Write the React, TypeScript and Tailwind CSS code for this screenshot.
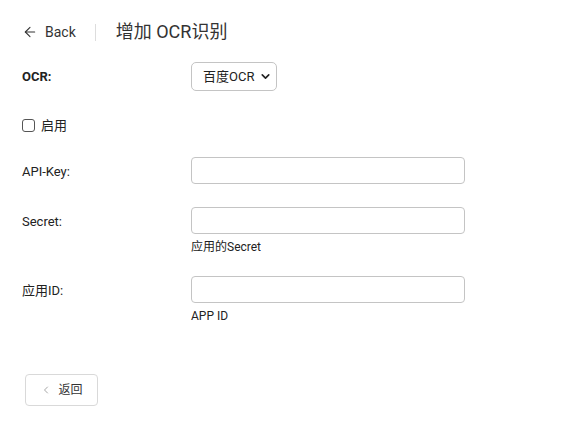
import { ArrowLeft, ChevronLeft, ChevronDown } from "lucide-react";

const font = { fontFamily: 'Roboto, "Noto Sans CJK SC", sans-serif' };

function Field({ label, help, top }: { label: string; help?: string; top: string }) {
  return (
    <div className={`flex ${top}`}>
      <label className="w-[169px] shrink-0 pt-[7px] text-[13px] leading-[16px] text-[#222]">{label}</label>
      <div>
        <input className="block h-[27px] w-[274px] rounded-[4px] border border-[#c4c4c4] bg-white" />
        {help && <div className="mt-[6px] text-[12px] leading-[15px] text-[#222]">{help}</div>}
      </div>
    </div>
  );
}

export default function App() {
  return (
    <div className="h-[433px] w-[585px] bg-white text-[#222]" style={font}>
      {/* header */}
      <div className="flex items-center pl-[22px] pt-[21px]">
        <ArrowLeft size={16} strokeWidth={1.6} className="text-[#333]" />
        <span className="ml-[7px] text-[14px] leading-[20px] text-[#333]">Back</span>
        <div className="ml-[19px] h-[17px] w-px bg-[#ddd]" />
        <h1 className="ml-[20px] text-[18px] leading-[22px] text-[#333]">增加 OCR识别</h1>
      </div>

      <div className="pl-[22px]">
        <div className="mt-[19px] flex items-center">
          <label className="w-[169px] shrink-0 text-[13px] font-bold">OCR:</label>
          <div className="flex h-[29px] w-[86px] items-center rounded-[5px] border border-[#c4c4c4] pl-[11px] text-[13px]">
            <span>百度OCR</span>
            <ChevronDown size={13} strokeWidth={3} className="ml-[5px]" />
          </div>
        </div>

        <label className="mt-[25px] flex items-center text-[13px]">
          <span className="h-[13px] w-[13px] rounded-[3px] border border-[#555]" />
          <span className="ml-[6px]">启用</span>
        </label>

        <Field label="API-Key:" top="mt-[21px]" />
        <Field label="Secret:" help="应用的Secret" top="mt-[23px]" />
        <Field label="应用ID:" top="mt-[21px]" help="APP ID" />

        <button className="ml-[3px] mt-[50px] flex h-[32px] w-[73px] items-center justify-center rounded-[4px] border border-[#d9d9d9] text-[12px] text-[#333]">
          <ChevronLeft size={12} strokeWidth={1.5} className="mr-[6px] text-[#888]" />
          返回
        </button>
      </div>
    </div>
  );
}
